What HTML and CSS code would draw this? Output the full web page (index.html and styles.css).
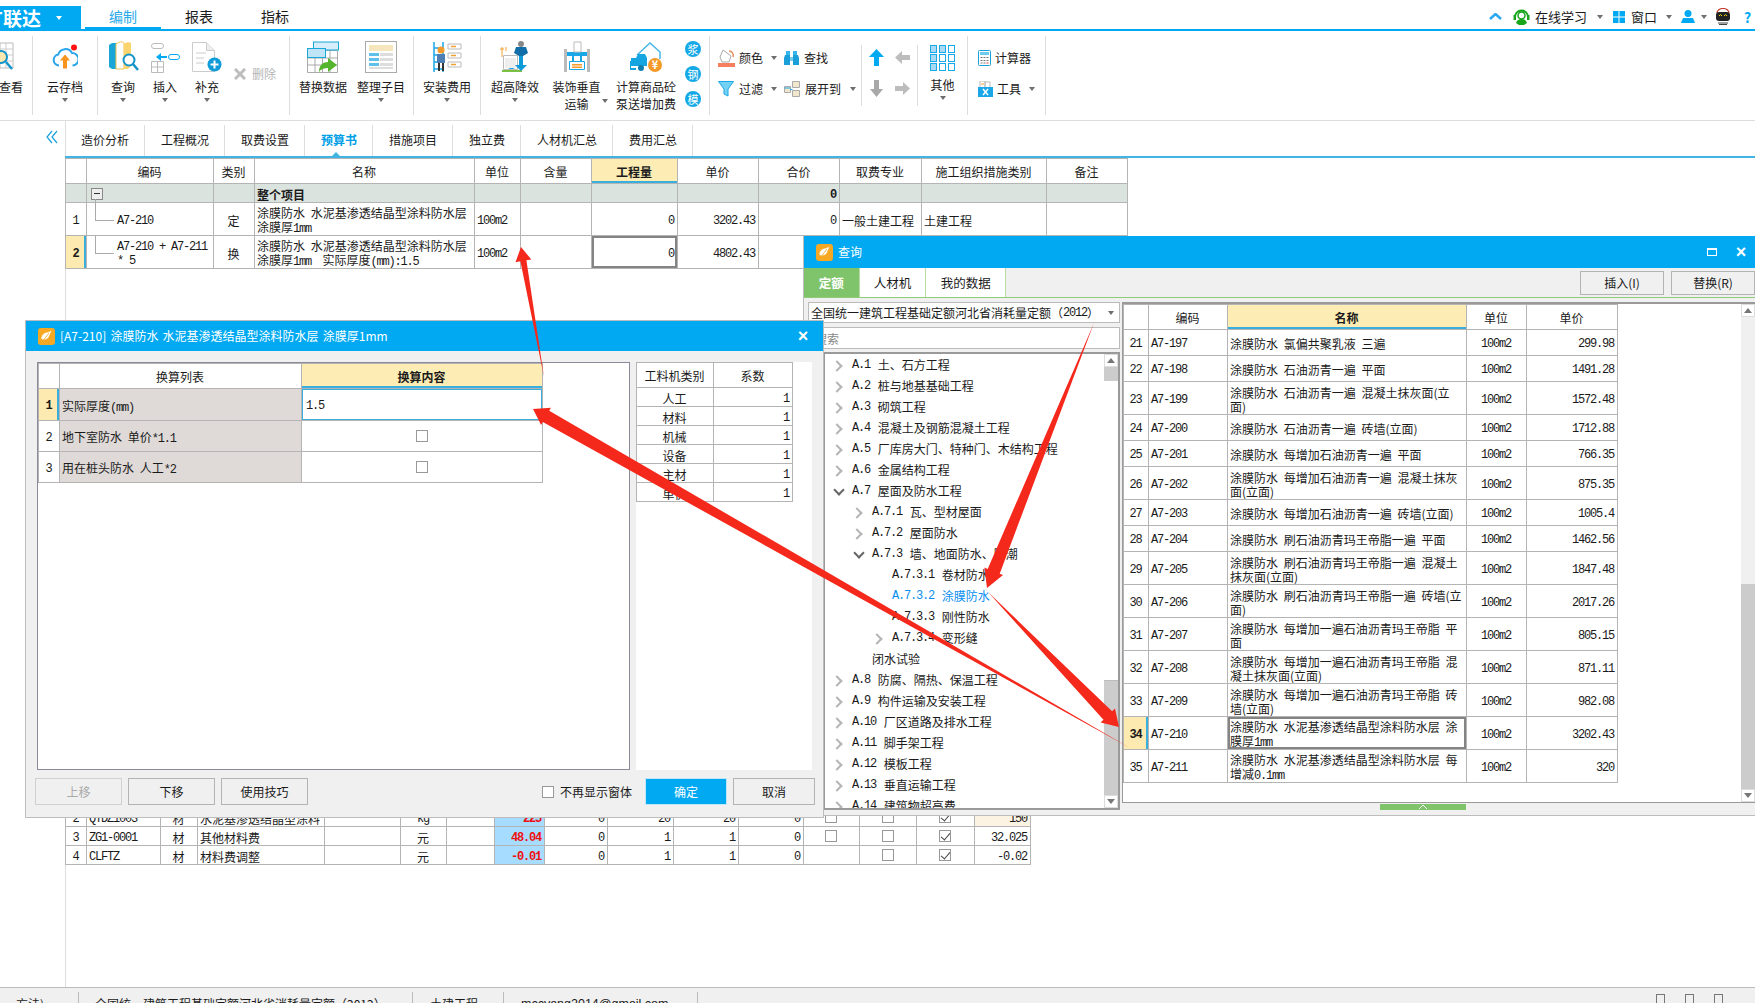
FILE: index.html
```html
<!DOCTYPE html>
<html lang="zh-CN">
<head>
    <meta charset="UTF-8">
    <title>广联达 预算书</title>
    <link rel="stylesheet" href="styles.css">
</head>
<body>
    <!-- top bar -->
    <div class="topbar">
        <div class="logo"><span class="logo-text">广联达</span><i class="caret caret-white"></i></div>
        <div class="menu-tab active">编制</div>
        <div class="menu-tab">报表</div>
        <div class="menu-tab">指标</div>
        <div class="top-right">
            <svg class="tr-up" width="13" height="7" viewBox="0 0 13 7"><path d="M1 6l5.500-5 5.500 5" fill="none" stroke="#2aa9f0" stroke-width="2.500"/></svg>
            <svg class="tr-head" width="17" height="17" viewBox="0 0 17 17"><path d="M2 9a6.500 6.500 0 0 1 13 0" fill="none" stroke="#17a51c" stroke-width="2"/><circle cx="8.500" cy="7.500" r="3.500" fill="none" stroke="#17a51c" stroke-width="1.500"/><rect x="0.500" y="7" width="2.500" height="5" fill="#17a51c"/><rect x="14" y="7" width="2.500" height="5" fill="#17a51c"/><path d="M3 15c1-3 3-4 5.500-4s4.500 1 5.500 4l-3 2H6z" fill="#17a51c"/></svg>
            <span class="tr-learn">在线学习</span>
            <i class="caret tr-c1"></i>
            <svg class="tr-win" width="12" height="12" viewBox="0 0 12 12"><path d="M0 0h5.500v5.500H0zM6.500 0H12v5.500H6.500zM0 6.500h5.500V12H0zM6.500 6.500H12V12H6.500z" fill="#00a9f1"/></svg>
            <span class="tr-wintext">窗口</span>
            <i class="caret tr-c2"></i>
            <svg class="tr-user" width="14" height="13" viewBox="0 0 14 13"><circle cx="7" cy="3.500" r="3.500" fill="#00a9f1"/><path d="M0 13l2-5h10l2 5z" fill="#00a9f1"/></svg>
            <i class="caret tr-c3"></i>
            <svg class="tr-bot" width="16" height="17" viewBox="0 0 16 17"><path d="M2 5a6 4.500 0 0 1 12 0" fill="none" stroke="#c0392b" stroke-width="1.200"/><rect x="1" y="4" width="14" height="9" rx="3" fill="#222"/><path d="M4 8l1.500-1.500L7 8M9 8l1.500-1.500L12 8" fill="none" stroke="#f5d90a"/><path d="M3 15h10M4 16.500h8" stroke="#444"/></svg>
            <span class="tr-help">?</span>
        </div>
    </div>

    <!-- ribbon -->
    <div class="ribbon">
        <div class="rb-group g-view">
            <div class="tool tool-view">
                <svg class="icon" width="14" height="32" viewBox="0 0 14 32"><path d="M0 2h13v25H0z" fill="#fff" stroke="#bbb"/><path d="M0 8h13M0 14h13M0 20h13M6 2v25" stroke="#ccc"/><circle cx="1" cy="16" r="6" fill="#ffe9b0" stroke="#1494c8" stroke-width="2"/><path d="M6 21l6 7" stroke="#1494c8" stroke-width="2.500"/></svg>
                <span class="label">查看</span>
            </div>
        </div>
        <div class="rb-group g-cloud">
            <div class="tool tool-full">
                <svg class="icon" width="26" height="25" viewBox="0 0 26 25"><path d="M7 21a5.500 5.500 0 0 1-.8-10.900A7.500 7.500 0 0 1 20 8.500a6 6 0 0 1 .5 12.500" fill="none" stroke="#2ba6e8" stroke-width="2"/><path d="M13 10l5 6h-3v8h-4v-8H8z" fill="#f7941d"/><circle cx="22" cy="3" r="3" fill="#f11"/></svg>
                <span class="label">云存档</span>
                <i class="caret"></i>
            </div>
        </div>
        <div class="rb-group g-edit">
            <div class="tool tool-42">
                <svg class="icon" width="31" height="32" viewBox="0 0 31 32"><path d="M1 4l3-2h4v26H4l-3-2z" fill="#1aa7d8"/><path d="M8 3c3-2 6-3 8-1v26H8z" fill="#fff" stroke="#f2c14e"/><path d="M16 3c2-2 5-2 7-1v10l-7 8z" fill="#fbd46d"/><path d="M16 28h4l3-3-7-5z" fill="#fbd46d"/><circle cx="21" cy="19" r="5.500" fill="#fff" stroke="#1494c8" stroke-width="2"/><path d="M25 23l5 6" stroke="#1494c8" stroke-width="2.500"/></svg>
                <span class="label">查询</span>
                <i class="caret"></i>
            </div>
            <div class="tool tool-42">
                <svg class="icon" width="29" height="32" viewBox="0 0 29 32"><rect x="0.500" y="2.500" width="12" height="5" rx="2.500" fill="#fff" stroke="#bbb"/><rect x="17.500" y="13.500" width="11" height="5" rx="2.500" fill="#fff" stroke="#00a9f1"/><path d="M5 16l5-4v3h6v2h-6v3z" fill="#00a9f1"/><path d="M0.500 20.500h12v11h-12zM0.500 26h12M6.500 20.500v11" fill="#fff" stroke="#bbb"/></svg>
                <span class="label">插入</span>
                <i class="caret"></i>
            </div>
            <div class="tool tool-42">
                <svg class="icon" width="30" height="32" viewBox="0 0 30 32"><path d="M0.500 1.500h14l8 8v21h-22z" fill="#fff" stroke="#ccc"/><path d="M14.500 1.500v8h8" fill="#eee" stroke="#ccc"/><path d="M4 12h10M4 17h8M4 22h8" stroke="#ccc"/><circle cx="22.500" cy="23.500" r="7" fill="#0f9bd7"/><path d="M22.500 19.500v8M18.500 23.500h8" stroke="#fff" stroke-width="2"/></svg>
                <span class="label">补充</span>
                <i class="caret"></i>
            </div>
            <div class="tool-delete">
                <svg width="12" height="12" viewBox="0 0 12 12"><path d="M1 1l10 10M11 1L1 11" stroke="#bdbdbd" stroke-width="3"/></svg>
                <span class="label-off">删除</span>
            </div>
        </div>
        <div class="rb-group g-data">
            <div class="tool tool-58">
                <svg class="icon" width="32" height="32" viewBox="0 0 32 32"><path d="M0.500 9.500h30v22h-30zM0.500 17h30M0.500 24h30M8 9.500v22M15.500 9.500v22M23 9.500v22" fill="#fff" stroke="#aaa"/><rect x="6.500" y="1" width="25" height="8" fill="#d5eef9" stroke="#1aa7d8"/><rect x="0.500" y="7.500" width="18" height="9" fill="#bfe4f5" stroke="#1aa7d8"/><path d="M12 31c0-7 4-10 9-10v-4l9 7-9 7v-4c-4 0-7 1-9 4z" fill="#55b52f"/></svg>
                <span class="label">替换数据</span>
            </div>
            <div class="tool tool-58">
                <svg class="icon" width="32" height="32" viewBox="0 0 32 32"><rect x="0.500" y="0.500" width="31" height="31" fill="#fff" stroke="#aaa"/><rect x="4" y="4" width="24" height="6" fill="#f5e6bb"/><path d="M4 12h10v3H4zM4 17h10v3H4zM4 22h10v3H4z" fill="#5fc0ea"/><path d="M15 12h13v3H15zM15 17h13v3H15zM15 22h13v3H15zM4 26h24v2H4z" fill="#ddd"/></svg>
                <span class="label">整理子目</span>
                <i class="caret"></i>
            </div>
        </div>
        <div class="rb-group g-install">
            <div class="tool tool-full">
                <svg class="icon" width="29" height="32" viewBox="0 0 29 32"><path d="M1 1v30M10 1v30M1 7h9M1 14h9M1 21h9M1 28h9" stroke="#1aa7e8" stroke-width="1.500"/><path d="M15 3h13v5H15zM15 12h13v5H15zM15 21h13v5H15z" fill="#fff" stroke="#bbb"/><path d="M18 5.500h5M18 14.500h5M18 23.500h5" stroke="#f0a030" stroke-width="1.500"/><circle cx="8" cy="9" r="3.500" fill="#f39a2b"/><path d="M4 13h8v9H4z" fill="#4d7fb5"/><path d="M5 22h2v8H5zM9 22h2v8H9z" fill="#333"/></svg>
                <span class="label">安装费用</span>
                <i class="caret"></i>
            </div>
        </div>
        <div class="rb-group g-calc">
            <div class="tool tool-56">
                <svg class="icon" width="30" height="32" viewBox="0 0 30 32"><path d="M0 8h4M2 6v10M6 6v4" stroke="#f0a030"/><path d="M3.500 14.500h14v14h-14z" fill="#fff" stroke="#bbb"/><path d="M5 17h11v10H5z" fill="#eee"/><path d="M2 30h20" stroke="#7ac143" stroke-width="2"/><path d="M8 28l2-1h3l2 1z" fill="#1aa7e8"/><circle cx="21" cy="3" r="3" fill="#888"/><path d="M14 12l2-6h10l2 6-5 3h-4z" fill="#126ea8"/><path d="M19 15h4v9h4l-6 6-6-6h4z" fill="#0f9bd7"/></svg>
                <span class="label">超高降效</span>
                <i class="caret"></i>
            </div>
            <div class="tool tool-67">
                <svg class="icon" width="26" height="32" viewBox="0 0 26 32"><path d="M0 8h3v23H0zM23 8h3v23h-3z" fill="#bbb"/><path d="M3 11h20v4H3z" fill="#1aa7e8"/><path d="M10 1h7v10h-7z" fill="#fff" stroke="#bbb"/><path d="M8 15h2v5H8zM16 15h2v5h-2z" fill="#1aa7e8"/><path d="M5.500 20.500h15v8h-15z" fill="#fff" stroke="#1aa7e8"/><path d="M8 23h10v1.500H8zM8 25.500h10V27H8z" fill="#f39a2b"/></svg>
                <span class="label">装饰垂直<br>运输</span>
                <i class="caret caret-side"></i>
            </div>
            <div class="tool tool-72">
                <svg class="icon" width="33" height="32" viewBox="0 0 33 32"><path d="M7 14L20 2l10 9v7" fill="none" stroke="#45b6e6" stroke-width="1.500"/><path d="M1 25V17h5l2-4h7l2 4v8z" fill="#15a6e2"/><path d="M0 20v8h6" fill="none" stroke="#15a6e2" stroke-width="2"/><circle cx="11" cy="27" r="3" fill="#0f7fb0"/><circle cx="25" cy="24" r="7" fill="#f39a2b"/><text class="yen" x="25" y="28">¥</text></svg>
                <span class="label">计算商品砼<br>泵送增加费</span>
            </div>
            <div class="badges">
                <span class="badge">浆</span>
                <span class="badge">钢</span>
                <span class="badge">模</span>
            </div>
        </div>
        <div class="g-find">
            <div class="rtool">
                <svg width="17" height="18" viewBox="0 0 17 18"><path d="M5 1l8 6-2 6H4L2 8z" fill="#fff" stroke="#aaa"/><path d="M11 2c3 0 5 3 4 6" fill="none" stroke="#e89060" stroke-width="1.500"/><path d="M0 14h17v4H0z" fill="#f57f5f"/></svg>
                <span class="rlabel">颜色</span><i class="caret"></i>
            </div>
            <div class="rtool">
                <svg width="15" height="16" viewBox="0 0 15 16"><path d="M2 1h4v4H2zM9 1h4v4H9z" fill="#35b5ea"/><path d="M1 5h5v10H0V8zM9 5h5l1 3v7H9z" fill="#1a9fd8"/><path d="M6 7h3v4H6z" fill="#7bcdf0"/></svg>
                <span class="rlabel">查找</span>
            </div>
            <div class="rtool">
                <svg width="16" height="16" viewBox="0 0 16 16"><path d="M0.500 0.500h15L10 8v7l-4-2V8z" fill="#76d2f5" stroke="#1aa7e8"/></svg>
                <span class="rlabel rlabel-wide">过滤</span><i class="caret"></i>
            </div>
            <div class="rtool">
                <svg width="16" height="16" viewBox="0 0 16 16"><path d="M0.500 5.500h6v6h-6zM8.500 0.500h7v6h-7zM8.500 9.500h7v6h-7z" fill="#f2e6cc" stroke="#aaa"/><path d="M6.500 8.500h2M0.500 7h6" stroke="#1aa7e8"/></svg>
                <span class="rlabel">展开到</span><i class="caret"></i>
            </div>
        </div>
        <div class="thin-sep"></div>
        <div class="g-arrows">
            <svg width="15" height="17" viewBox="0 0 15 17"><path d="M7.500 0L15 8h-5v9H5V8H0z" fill="#00a9f1"/></svg>
            <svg width="15" height="13" viewBox="0 0 15 13"><path d="M0 6.500L7 0v4h8v5H7v4z" fill="#bdbdbd"/></svg>
            <svg width="13" height="17" viewBox="0 0 13 17"><path d="M6.500 17L0 9h4V0h5v9h4z" fill="#a8a8a8"/></svg>
            <svg width="15" height="13" viewBox="0 0 15 13"><path d="M15 6.500L8 0v4H0v5h8v4z" fill="#bdbdbd"/></svg>
        </div>
        <div class="thin-sep"></div>
        <div class="rb-group g-other">
            <div class="tool tool-full tool-other">
                <svg class="icon" width="25" height="26" viewBox="0 0 25 26"><g fill="#a9daf3" stroke="#19a8ea"><rect x="0.500" y="0.500" width="6" height="7"/><rect x="9.500" y="0.500" width="6" height="7"/><rect x="18.500" y="0.500" width="6" height="7" fill="#fff"/><rect x="0.500" y="9.500" width="6" height="7"/><rect x="9.500" y="9.500" width="6" height="7" fill="#fff"/><rect x="18.500" y="9.500" width="6" height="7" fill="#fff"/><rect x="0.500" y="18.500" width="6" height="7"/><rect x="9.500" y="18.500" width="6" height="7" fill="#fff"/><rect x="18.500" y="18.500" width="6" height="7" fill="#fff"/></g></svg>
                <span class="label">其他</span>
                <i class="caret"></i>
            </div>
        </div>
        <div class="rb-group g-tools">
            <div class="rtool">
                <svg width="13" height="16" viewBox="0 0 13 16"><rect x="0.500" y="0.500" width="12" height="15" rx="1" fill="#fff" stroke="#1a9fd8"/><path d="M2 2h9v3H2z" fill="#6ecbf0"/><path d="M2.500 7.500h2M5.500 7.500h2M8.500 7.500h2M2.500 10.500h2M5.500 10.500h2M8.500 10.500h2M2.500 13h2M5.500 13h2" stroke="#777"/><path d="M8.500 13h2" stroke="#e33"/></svg>
                <span class="rlabel">计算器</span>
            </div>
            <div class="rtool">
                <svg width="15" height="16" viewBox="0 0 15 16"><path d="M2 0h5v7H2zM7 1h5v6H7z" fill="#fff" stroke="#bbb"/><path d="M3 3h3" stroke="#f0a030"/><path d="M0 6h15v10H0z" fill="#1aa7e8"/><path d="M5 8l5 6M10 8l-5 6" stroke="#fff" stroke-width="1.500"/></svg>
                <span class="rlabel">工具</span><i class="caret"></i>
            </div>
        </div>
    </div>

    <!-- work area -->
    <div class="workspace">
        <div class="side">
            <svg width="12" height="14" viewBox="0 0 12 14"><path d="M6 1L1 7l5 6M11 1L6 7l5 6" fill="none" stroke="#19a0dc" stroke-width="1.200"/></svg>
        </div>
        <div class="sheet">
            <div class="doc-tabs">
                <div class="doc-tab">造价分析</div>
                <div class="doc-tab">工程概况</div>
                <div class="doc-tab">取费设置</div>
                <div class="doc-tab current">预算书</div>
                <div class="doc-tab">措施项目</div>
                <div class="doc-tab">独立费</div>
                <div class="doc-tab">人材机汇总</div>
                <div class="doc-tab">费用汇总</div>
            </div>

            <table class="grid budget">
                <colgroup>
                    <col class="w21"><col class="w127"><col class="w41"><col class="w220"><col class="w46"><col class="w71"><col class="w86"><col class="w81"><col class="w81"><col class="w82"><col class="w125"><col class="w81">
                </colgroup>
                <tr class="h25 head">
                    <th></th><th>编码</th><th>类别</th><th>名称</th><th>单位</th><th>含量</th><th class="sorted">工程量</th><th>单价</th><th>合价</th><th>取费专业</th><th>施工组织措施类别</th><th>备注</th>
                </tr>
                <tr class="h19 group">
                    <td></td><td><span class="fold"></span></td><td></td><td class="bold">整个项目</td><td></td><td></td><td></td><td></td><td class="m r bold">0</td><td></td><td></td><td></td>
                </tr>
                <tr class="h33">
                    <td class="m c">1</td><td class="m treecell first">A7-210</td><td class="c">定</td><td>涂膜防水 水泥基渗透结晶型涂料防水层<br>涂膜厚<span class="n">1mm</span></td><td class="m">100m2</td><td></td><td class="m r">0</td><td class="m r">3202.43</td><td class="m r">0</td><td>一般土建工程</td><td>土建工程</td><td></td>
                </tr>
                <tr class="h33">
                    <td class="m c cur-idx">2</td><td class="m treecell last">A7-210 + A7-211<br>* 5</td><td class="c">换</td><td>涂膜防水 水泥基渗透结晶型涂料防水层<br>涂膜厚<span class="n">1mm</span>&nbsp; 实际厚度<span class="n">(mm):1.5</span></td><td class="m">100m2</td><td></td><td class="m r picked">0</td><td class="m r">4802.43</td><td></td><td></td><td></td><td></td>
                </tr>
            </table>

            <table class="grid materials">
                <colgroup>
                    <col class="w21"><col class="w74"><col class="w37"><col class="w127"><col class="w76"><col class="w46"><col class="w48"><col class="w50"><col class="w63"><col class="w66"><col class="w65"><col class="w65"><col class="w56"><col class="w57"><col class="w58"><col class="w56">
                </colgroup>
                <tr class="h19">
                    <td class="m c">2</td><td class="m">QTDZ1003</td><td class="c">材</td><td>水泥基渗透结晶型涂料</td><td></td><td class="c m">kg</td><td></td><td class="m r price">225</td><td class="m r">0</td><td class="m r">20</td><td class="m r">20</td><td class="m r">0</td><td class="c"><span class="cb"></span></td><td class="c"><span class="cb"></span></td><td class="c"><span class="cb on"></span></td><td class="m r warm">150</td>
                </tr>
                <tr class="h19">
                    <td class="m c">3</td><td class="m">ZG1-0001</td><td class="c">材</td><td>其他材料费</td><td></td><td class="c">元</td><td></td><td class="m r price">48.04</td><td class="m r">0</td><td class="m r">1</td><td class="m r">1</td><td class="m r">0</td><td class="c"><span class="cb"></span></td><td class="c"><span class="cb"></span></td><td class="c"><span class="cb on"></span></td><td class="m r">32.025</td>
                </tr>
                <tr class="h19">
                    <td class="m c">4</td><td class="m">CLFTZ</td><td class="c">材</td><td>材料费调整</td><td></td><td class="c">元</td><td></td><td class="m r price">-0.01</td><td class="m r">0</td><td class="m r">1</td><td class="m r">1</td><td class="m r">0</td><td></td><td class="c"><span class="cb"></span></td><td class="c"><span class="cb on"></span></td><td class="m r">-0.02</td>
                </tr>
            </table>
        </div>
    </div>

    <!-- status bar -->
    <div class="statusbar">
        <div class="st st-a">方法)</div>
        <div class="st st-b">全国统一建筑工程基础定额河北省消耗量定额（2012）</div>
        <div class="st st-c">土建工程</div>
        <div class="st st-d">mccyang2014@gmail.com</div>
        <div class="st-icons"><i></i><i></i><i></i></div>
    </div>

    <!-- query window -->
    <div class="win query">
        <div class="win-title">
            <svg class="app-icon" width="17" height="17" viewBox="0 0 17 17"><rect width="17" height="17" rx="3" fill="#f7a823"/><path d="M3 11c0-4 3-7 7-7l4-2-2 5c-1 3-3 5-7 5zM4 14l7-9" fill="#fff" stroke="#f7a823" stroke-width=".8"/></svg>
            <span>查询</span>
            <span class="win-max"></span>
            <span class="win-x">×</span>
        </div>
        <div class="query-tabs">
            <div class="q-tab on">定额</div>
            <div class="q-tab q-mid">人材机</div>
            <div class="q-tab q-wide">我的数据</div>
            <div class="q-btn q-btn-first">插入(I)</div>
            <div class="q-btn">替换(R)</div>
        </div>
        <div class="query-body">
            <div class="q-left">
                <div class="q-select">全国统一建筑工程基础定额河北省消耗量定额（<span class="n">2012</span>）<i class="caret"></i></div>
                <div class="q-search">搜索</div>
                <div class="q-tree">
                    <div class="tree-list">
                        <div class="node"><i class="chev"></i><span class="n">A.1</span> 土、石方工程</div>
                        <div class="node"><i class="chev"></i><span class="n">A.2</span> 桩与地基基础工程</div>
                        <div class="node"><i class="chev"></i><span class="n">A.3</span> 砌筑工程</div>
                        <div class="node"><i class="chev"></i><span class="n">A.4</span> 混凝土及钢筋混凝土工程</div>
                        <div class="node"><i class="chev"></i><span class="n">A.5</span> 厂库房大门、特种门、木结构工程</div>
                        <div class="node"><i class="chev"></i><span class="n">A.6</span> 金属结构工程</div>
                        <div class="node"><i class="chev open"></i><span class="n">A.7</span> 屋面及防水工程</div>
                        <div class="node lv2"><i class="chev"></i><span class="n">A.7.1</span> 瓦、型材屋面</div>
                        <div class="node lv2"><i class="chev"></i><span class="n">A.7.2</span> 屋面防水</div>
                        <div class="node lv2"><i class="chev open"></i><span class="n">A.7.3</span> 墙、地面防水、防潮</div>
                        <div class="node lv3"><i class="chev none"></i><span class="n">A.7.3.1</span> 卷材防水</div>
                        <div class="node lv3 sel"><i class="chev none"></i><span class="n">A.7.3.2</span> 涂膜防水</div>
                        <div class="node lv3"><i class="chev none"></i><span class="n">A.7.3.3</span> 刚性防水</div>
                        <div class="node lv3"><i class="chev"></i><span class="n">A.7.3.4</span> 变形缝</div>
                        <div class="node lv2"><i class="chev none"></i>闭水试验</div>
                        <div class="node"><i class="chev"></i><span class="n">A.8</span> 防腐、隔热、保温工程</div>
                        <div class="node"><i class="chev"></i><span class="n">A.9</span> 构件运输及安装工程</div>
                        <div class="node"><i class="chev"></i><span class="n">A.10</span> 厂区道路及排水工程</div>
                        <div class="node"><i class="chev"></i><span class="n">A.11</span> 脚手架工程</div>
                        <div class="node"><i class="chev"></i><span class="n">A.12</span> 模板工程</div>
                        <div class="node"><i class="chev"></i><span class="n">A.13</span> 垂直运输工程</div>
                        <div class="node"><i class="chev"></i><span class="n">A.14</span> 建筑物超高费</div>
                    </div>
                    <div class="vbar">
                        <span class="vb-up"></span>
                        <span class="vb-grey vb-grey-s"></span>
                        <span class="vb-track"></span>
                        <span class="vb-grey vb-grey-l"></span>
                        <span class="vb-down"></span>
                    </div>
                </div>
            </div>
            <div class="q-right">
                <div class="q-box">
                    <table class="grid quota">
                        <colgroup><col class="w25"><col class="w79"><col class="w239"><col class="w60"><col class="w91"></colgroup>
                        <tr class="h25"><th></th><th>编码</th><th class="sorted">名称</th><th>单位</th><th>单价</th></tr>
                        <tr class="h26"><td class="m c">21</td><td class="m">A7-197</td><td>涂膜防水 氯偏共聚乳液 三遍</td><td class="m c">100m2</td><td class="m r">299.98</td></tr>
                        <tr class="h26"><td class="m c">22</td><td class="m">A7-198</td><td>涂膜防水 石油沥青一遍 平面</td><td class="m c">100m2</td><td class="m r">1491.28</td></tr>
                        <tr class="h33"><td class="m c">23</td><td class="m">A7-199</td><td>涂膜防水 石油沥青一遍 混凝土抹灰面(立<br>面)</td><td class="m c">100m2</td><td class="m r">1572.48</td></tr>
                        <tr class="h26"><td class="m c">24</td><td class="m">A7-200</td><td>涂膜防水 石油沥青一遍 砖墙(立面)</td><td class="m c">100m2</td><td class="m r">1712.88</td></tr>
                        <tr class="h26"><td class="m c">25</td><td class="m">A7-201</td><td>涂膜防水 每增加石油沥青一遍 平面</td><td class="m c">100m2</td><td class="m r">766.35</td></tr>
                        <tr class="h33"><td class="m c">26</td><td class="m">A7-202</td><td>涂膜防水 每增加石油沥青一遍 混凝土抹灰<br>面(立面)</td><td class="m c">100m2</td><td class="m r">875.35</td></tr>
                        <tr class="h26"><td class="m c">27</td><td class="m">A7-203</td><td>涂膜防水 每增加石油沥青一遍 砖墙(立面)</td><td class="m c">100m2</td><td class="m r">1005.4</td></tr>
                        <tr class="h26"><td class="m c">28</td><td class="m">A7-204</td><td>涂膜防水 刷石油沥青玛王帝脂一遍 平面</td><td class="m c">100m2</td><td class="m r">1462.56</td></tr>
                        <tr class="h33"><td class="m c">29</td><td class="m">A7-205</td><td>涂膜防水 刷石油沥青玛王帝脂一遍 混凝土<br>抹灰面(立面)</td><td class="m c">100m2</td><td class="m r">1847.48</td></tr>
                        <tr class="h33"><td class="m c">30</td><td class="m">A7-206</td><td>涂膜防水 刷石油沥青玛王帝脂一遍 砖墙(立<br>面)</td><td class="m c">100m2</td><td class="m r">2017.26</td></tr>
                        <tr class="h33"><td class="m c">31</td><td class="m">A7-207</td><td>涂膜防水 每增加一遍石油沥青玛王帝脂 平<br>面</td><td class="m c">100m2</td><td class="m r">805.15</td></tr>
                        <tr class="h33"><td class="m c">32</td><td class="m">A7-208</td><td>涂膜防水 每增加一遍石油沥青玛王帝脂 混<br>凝土抹灰面(立面)</td><td class="m c">100m2</td><td class="m r">871.11</td></tr>
                        <tr class="h33"><td class="m c">33</td><td class="m">A7-209</td><td>涂膜防水 每增加一遍石油沥青玛王帝脂 砖<br>墙(立面)</td><td class="m c">100m2</td><td class="m r">982.08</td></tr>
                        <tr class="h33"><td class="m c cur-idx">34</td><td class="m">A7-210</td><td class="picked">涂膜防水 水泥基渗透结晶型涂料防水层 涂<br>膜厚<span class="n">1mm</span></td><td class="m c">100m2</td><td class="m r">3202.43</td></tr>
                        <tr class="h33"><td class="m c">35</td><td class="m">A7-211</td><td>涂膜防水 水泥基渗透结晶型涂料防水层 每<br>增减<span class="n">0.1mm</span></td><td class="m c">100m2</td><td class="m r">320</td></tr>
                    </table>
                    <div class="vbar vbar-q">
                        <span class="vb-up"></span>
                        <span class="vb-light"></span>
                        <span class="vb-grey vb-grey-q"></span>
                        <span class="vb-down"></span>
                    </div>
                </div>
                <div class="q-handle"><svg width="10" height="6" viewBox="0 0 10 6"><path d="M1 5l4-4 4 4" fill="none" stroke="#fff"/></svg></div>
            </div>
        </div>
    </div>

    <!-- conversion window -->
    <div class="win convert">
        <div class="win-title">
            <svg class="app-icon" width="17" height="17" viewBox="0 0 17 17"><rect width="17" height="17" rx="3" fill="#f7a823"/><path d="M3 11c0-4 3-7 7-7l4-2-2 5c-1 3-3 5-7 5zM4 14l7-9" fill="#fff" stroke="#f7a823" stroke-width=".8"/></svg>
            <span>[A7-210] 涂膜防水 水泥基渗透结晶型涂料防水层 涂膜厚1mm</span>
            <span class="win-x">×</span>
        </div>
        <div class="conv-main">
            <div class="conv-box">
                <table class="grid conv-table">
                    <colgroup><col class="w21"><col class="w242"><col class="w241"></colgroup>
                    <tr class="h25"><th></th><th>换算列表</th><th class="sorted">换算内容</th></tr>
                    <tr class="h32"><td class="m c cur-idx">1</td><td class="tinted">实际厚度<span class="n">(mm)</span></td><td class="m editing">1.5</td></tr>
                    <tr class="h31"><td class="m c">2</td><td class="tinted">地下室防水 单价<span class="n">*1.1</span></td><td class="c"><span class="cb"></span></td></tr>
                    <tr class="h31"><td class="m c">3</td><td class="tinted">用在桩头防水 人工<span class="n">*2</span></td><td class="c"><span class="cb"></span></td></tr>
                </table>
            </div>
            <div class="conv-side">
                <table class="grid ratio">
                    <colgroup><col class="w77"><col class="w79"></colgroup>
                    <tr class="h25"><th>工料机类别</th><th>系数</th></tr>
                    <tr class="h19"><td class="c">人工</td><td class="m r">1</td></tr>
                    <tr class="h19"><td class="c">材料</td><td class="m r">1</td></tr>
                    <tr class="h19"><td class="c">机械</td><td class="m r">1</td></tr>
                    <tr class="h19"><td class="c">设备</td><td class="m r">1</td></tr>
                    <tr class="h19"><td class="c">主材</td><td class="m r">1</td></tr>
                    <tr class="h19"><td class="c">单价</td><td class="m r">1</td></tr>
                </table>
            </div>
        </div>
        <div class="conv-foot">
            <div class="btn off">上移</div>
            <div class="btn">下移</div>
            <div class="btn">使用技巧</div>
            <span class="cb foot-cb"></span>
            <span class="foot-label">不再显示窗体</span>
            <div class="btn primary">确定</div>
            <div class="btn">取消</div>
        </div>
    </div>

    <!-- red annotation arrows -->
    <svg class="marks" width="1755" height="1003" viewBox="0 0 1755 1003">
        <polygon points="544,377 526.400,260.300 531.300,259.400 521,247 515.500,262.200 520.400,261.300"/>
        <polygon points="1130,748 549.200,410.800 550.900,407.700 533,409 541.100,425.100 542.800,422"/>
        <polygon points="1094,323 999.700,573.700 1003,575 987,588 984.400,567.600 987.700,568.900"/>
        <polygon points="988,592 1112.100,711.300 1115,708.500 1119,727 1100.600,722.500 1103.500,719.700"/>
    </svg>
</body>
</html>
```

FILE: styles.css
```css
* {
    margin: 0;
    padding: 0;
    box-sizing: border-box;
}

body {
    position: relative;
    display: flex;
    flex-direction: column;
    width: 1755px;
    height: 1003px;
    overflow: hidden;
    background: #fff;
    color: #1a1a1a;
    font-family: "Noto Sans CJK SC", "Liberation Sans", sans-serif;
    font-size: 12px;
    line-height: 14px;
    word-spacing: 3px;
}

i {
    display: block;
}

.n,
.m {
    font-family: "Liberation Mono", "Noto Sans CJK SC", monospace;
    font-size: 12px;
    letter-spacing: -1.2px;
    word-spacing: 0;
}

.n {
    line-height: 1;
}

.caret {
    width: 0;
    height: 0;
    border-left: 3.5px solid transparent;
    border-right: 3.5px solid transparent;
    border-top: 4px solid #6e6e6e;
}

.caret-white {
    border-top-color: #fff;
}

/* top bar */
.topbar {
    display: flex;
    height: 31px;
    border-bottom: 2px solid #00a9f1;
    flex: none;
}

.logo {
    display: flex;
    justify-content: flex-end;
    align-items: center;
    width: 81px;
    height: 23px;
    margin: 6px 4px 0 0;
    padding-right: 19px;
    overflow: hidden;
    background: #00a9f1;
    color: #fff;
}

.logo-text {
    flex: none;
    margin-right: 15px;
    font-size: 19px;
    font-weight: 700;
}

.menu-tab {
    width: 76px;
    height: 31px;
    padding-top: 9px;
    font-size: 14px;
    text-align: center;
}

.menu-tab.active {
    border-bottom: 4px solid #00a9f1;
    color: #2aa9e8;
}

.top-right {
    display: flex;
    align-items: center;
    margin-left: auto;
    height: 29px;
    padding-top: 4px;
    font-size: 13px;
}

.tr-up { margin-right: 11px; }
.tr-head { margin-right: 5px; }
.tr-learn { margin-right: 10px; }
.tr-c1 { margin-right: 10px; }
.tr-win { margin-right: 6px; }
.tr-wintext { margin-right: 9px; }
.tr-c2 { margin-right: 9px; }
.tr-user { margin-right: 6px; }
.tr-c3 { margin-right: 8px; }
.tr-bot { margin-right: 13px; }

.tr-help {
    width: 11px;
    color: #00a9f1;
    font-size: 14px;
    font-weight: 700;
}

/* ribbon */
.ribbon {
    display: flex;
    flex: none;
    height: 90px;
    padding-top: 5px;
    border-bottom: 1px solid #ddd;
}

.rb-group {
    display: flex;
    flex: none;
    height: 79px;
    border-right: 1px solid #ddd;
}

.g-view { width: 33px; }
.g-cloud { width: 65px; }
.g-edit { width: 192px; padding-left: 4px; }
.g-data { width: 124px; padding-left: 4px; }
.g-install { width: 67px; }
.g-calc { width: 229px; padding-left: 6px; }
.g-other { width: 50px; }
.g-tools { display: grid; grid-template-rows: 31px 31px; width: 78px; padding: 6px 0 0 10px; }

.tool {
    position: relative;
    display: flex;
    flex: none;
    flex-direction: column;
    align-items: center;
    padding-top: 5px;
}

.tool .icon {
    flex: none;
    height: 32px;
    margin-bottom: 5px;
}

.tool .caret {
    margin-top: 3px;
}

.tool .caret-side {
    position: absolute;
    top: 60px;
    right: 2px;
}

.tool-view { width: 44px; margin-left: -11px; align-items: center; }
.tool-view .icon { align-self: flex-end; margin-right: 19px; }
.tool-full { width: 100%; }
.tool-42 { width: 42px; }
.tool-58 { width: 58px; }
.tool-56 { width: 56px; }
.tool-67 { width: 67px; }
.tool-72 { width: 72px; }
.tool-other .icon { margin: 4px 0 5px; height: 26px; }

.label {
    height: 33px;
    text-align: center;
    line-height: 17px;
    white-space: nowrap;
}

.tool .label {
    height: auto;
}

.tool-delete {
    display: flex;
    align-items: center;
    gap: 6px;
    height: 14px;
    margin: 31px 0 0 6px;
}

.label-off {
    color: #b5b5b5;
}

.yen {
    fill: #fff;
    font-size: 11px;
    font-weight: 700;
    text-anchor: middle;
}

.badges {
    display: flex;
    flex-direction: column;
    gap: 9px;
    margin: 5px 0 0 3px;
}

.badge {
    width: 16px;
    height: 16px;
    border-radius: 50%;
    background: #14a9e6;
    color: #fff;
    font-size: 11px;
    line-height: 16px;
    text-align: center;
}

.g-find {
    display: grid;
    grid-template-columns: 66px 76px;
    grid-template-rows: 31px 31px;
    flex: none;
    width: 151px;
    height: 79px;
    padding: 6px 0 0 8px;
}

.rtool {
    display: flex;
    align-items: center;
    gap: 4px;
}

.g-find .rtool:nth-child(even) {
    gap: 5px;
}

.rtool .caret {
    margin-left: 4px;
}

.rlabel {
    white-space: nowrap;
}

.rlabel-wide {
    margin-left: 1px;
}

.thin-sep {
    flex: none;
    width: 1px;
    height: 61px;
    margin-top: 9px;
    background: #ddd;
}

.g-arrows {
    display: grid;
    grid-template-columns: 26px 26px;
    grid-template-rows: 31px 31px;
    place-items: center;
    flex: none;
    width: 55px;
    height: 79px;
    padding: 6px 0 0 1px;
}

/* work area */
.workspace {
    display: flex;
    flex: 1;
    min-height: 0;
}

.side {
    flex: none;
    width: 65px;
    padding: 9px 0 0 46px;
}

.sheet {
    flex: 1;
    border-left: 1px solid #ddd;
}

.doc-tabs {
    position: relative;
    display: flex;
    height: 37px;
    margin-left: -1px;
    padding-top: 4px;
    border-bottom: 2px solid #41b4e3;
}

.doc-tab {
    padding: 8px 15px 0 16px;
    border-right: 1px solid #ddd;
    word-spacing: 0;
}

.doc-tab:first-child {
    margin-left: 0;
    border-left: 1px solid #ddd;
    padding-left: 15px;
}

.doc-tab.current {
    position: relative;
    color: #00a0e8;
    font-weight: 700;
}

.doc-tab.current::after {
    content: '';
    position: absolute;
    left: 27px;
    bottom: 0;
    border-left: 4px solid transparent;
    border-right: 4px solid transparent;
    border-bottom: 4px solid #41b4e3;
}

/* tables */
.grid {
    table-layout: fixed;
    border-collapse: collapse;
    background: #fff;
}

.grid th,
.grid td {
    height: inherit;
    padding: 3px 3px 0 2px;
    overflow: hidden;
    border: 1px solid #b4b4b4;
    white-space: nowrap;
    font-weight: 400;
    vertical-align: middle;
}

.grid th {
    padding-top: 2px;
}

.grid td:has(.cb) {
    padding-top: 0;
}

.grid th.sorted {
    background: #fdedb4;
    box-shadow: inset 0 -2px 0 #3aaedc;
    font-weight: 700;
}

.c { text-align: center; }
.r { text-align: right; }
.grid td.bold { font-weight: 700; }

.h19 { height: 19px; }
.h25 { height: 25px; }
.h26 { height: 26px; }
.h31 { height: 31px; }
.h32 { height: 32px; }
.h33 { height: 33px; }

.w21 { width: 21px; }
.w25 { width: 25px; }
.w37 { width: 37px; }
.w41 { width: 41px; }
.w46 { width: 46px; }
.w48 { width: 48px; }
.w50 { width: 50px; }
.w56 { width: 56px; }
.w57 { width: 57px; }
.w58 { width: 58px; }
.w60 { width: 60px; }
.w63 { width: 63px; }
.w65 { width: 65px; }
.w66 { width: 66px; }
.w71 { width: 71px; }
.w74 { width: 74px; }
.w76 { width: 76px; }
.w77 { width: 77px; }
.w79 { width: 79px; }
.w81 { width: 81px; }
.w82 { width: 82px; }
.w86 { width: 86px; }
.w91 { width: 91px; }
.w125 { width: 125px; }
.w127 { width: 127px; }
.w220 { width: 220px; }
.w239 { width: 239px; }
.w241 { width: 241px; }
.w242 { width: 242px; }

.budget { width: 1062px; margin-left: -1px; }
.materials { width: 965px; margin: 538px 0 0 -1px; }
.quota { width: 494px; flex: none; align-self: flex-start; }
.conv-table { width: 504px; }
.ratio { width: 156px; }

.group td {
    background: #dbe3de;
}

.fold {
    display: block;
    position: relative;
    width: 12px;
    height: 12px;
    margin: -1px 0 0 2px;
    border: 1px solid #888;
    background: #eee;
}

.fold::after {
    content: '';
    position: absolute;
    left: 2px;
    top: 4px;
    width: 6px;
    height: 1px;
    background: #333;
}

.grid td.treecell {
    position: relative;
    padding-left: 30px;
    overflow: visible;
}

.treecell::before {
    content: '';
    position: absolute;
    left: 8px;
    width: 18px;
    border-left: 1px solid #aaa;
    border-bottom: 1px solid #aaa;
}

.treecell.first::before {
    top: -4px;
    height: 21px;
}

.treecell.last::before {
    top: 0;
    height: 17px;
}

.grid td.cur-idx {
    background: #fdeab0;
    box-shadow: inset -2px 0 0 #3aaedc;
    font-weight: 700;
}

.grid td.picked {
    box-shadow: inset 0 0 0 2px #848484;
}

.grid td.tinted {
    background: #dfdad8;
}

.grid td.editing {
    box-shadow: inset 0 0 0 1px #3aaedc;
    padding-left: 4px;
}

.grid td.price {
    background: #a6dcff;
    color: #f01010;
    font-weight: 700;
}

.grid td.warm {
    background: #fdf3e3;
}

.cb {
    display: block;
    position: relative;
    width: 12px;
    height: 12px;
    margin: 0 auto;
    border: 1px solid #999;
    background: #fff;
}

.cb.on::after {
    content: '';
    position: absolute;
    left: 3px;
    top: 0;
    width: 4px;
    height: 8px;
    border-right: 1.5px solid #444;
    border-bottom: 1.5px solid #444;
    transform: rotate(40deg);
}

/* status bar */
.statusbar {
    display: flex;
    flex: none;
    height: 16px;
    overflow: hidden;
    border-top: 1px solid #bbb;
    background: #f0f0f0;
}

.st {
    flex: none;
    margin-top: 4px;
    padding-top: 5px;
    height: 30px;
    border-right: 1px solid #bbb;
    white-space: nowrap;
    word-spacing: 0;
}

.st-a { width: 79px; padding-right: 34px; text-align: right; }
.st-b { width: 334px; padding-left: 16px; }
.st-c { width: 91px; padding-left: 17px; }
.st-d { width: 194px; padding-left: 17px; font-family: "Liberation Sans", sans-serif; font-size: 12.5px; }

.st-icons {
    display: flex;
    gap: 20px;
    margin: 6px 32px 0 auto;
}

.st-icons i {
    width: 9px;
    height: 14px;
    border: 1px solid #777;
}

/* windows on the desktop */
.win {
    position: absolute;
    display: flex;
    flex-direction: column;
    overflow: hidden;
    background: #f0f0f0;
    border: 1px solid #bdbdbd;
}

.win-title {
    display: flex;
    flex: none;
    align-items: center;
    gap: 5px;
    background: #00a9f1;
    color: #fff;
    font-size: 12px;
    word-spacing: 1.5px;
}

.app-icon {
    flex: none;
}

.win-x {
    width: 12px;
    margin-left: auto;
    font-family: "Liberation Sans", sans-serif;
    font-size: 18px;
    font-weight: 700;
    text-align: center;
}

.win-max {
    width: 10px;
    height: 8px;
    margin-left: auto;
    border: 1px solid #fff;
    border-top-width: 2px;
}

.query {
    left: 803px;
    top: 236px;
    width: 952px;
    height: 580px;
    border-width: 0 0 1px 1px;
}

.query .win-title {
    height: 32px;
    padding-left: 12px;
}

.query .win-max + .win-x {
    margin-left: 13px;
    margin-right: 8px;
}

.query-tabs {
    display: flex;
    flex: none;
    height: 30px;
    padding-right: 0;
    border-bottom: 1px solid #8fcb78;
}

.q-tab {
    width: 56px;
    padding-top: 8px;
    background: #fff;
    border-right: 1px solid #b5dca6;
    font-size: 12.5px;
    text-align: center;
}

.q-tab.on {
    background: #7fc46b;
    color: #fff;
    font-weight: 700;
}

.q-mid { width: 67px; }
.q-wide { width: 80px; }

.q-btn {
    flex: none;
    width: 84px;
    height: 24px;
    margin: 3px 0 0 7px;
    padding-top: 4px;
    border: 1px solid #b4b4b4;
    text-align: center;
}

.q-btn-first {
    margin-left: 574px;
}

.query-body {
    display: flex;
    flex: 1;
    gap: 2px;
    padding: 4px 0 0 4px;
    min-height: 0;
}

.q-left {
    display: flex;
    flex: none;
    flex-direction: column;
    width: 312px;
}

.q-select {
    display: flex;
    align-items: center;
    flex: none;
    height: 21px;
    padding-left: 2px;
    border: 1px solid #bbb;
    background: #fff;
    white-space: nowrap;
}

.q-select .caret {
    margin-left: auto;
    margin-right: 5px;
}

.q-search {
    flex: none;
    height: 22px;
    margin-top: 4px;
    padding: 4px 0 0 6px;
    border: 1px solid #bbb;
    background: #fff;
    color: #888;
}

.q-tree {
    display: flex;
    flex: none;
    height: 458px;
    margin: 3px 0 0 16px;
    border: 1px solid #9a9a9a;
    border-width: 2px 2px 2px 1px;
    background: #fff;
    overflow: hidden;
}

.tree-list {
    flex: 1;
    padding-top: 0.5px;
    overflow: hidden;
}

.node {
    display: flex;
    align-items: center;
    height: 21px;
    padding-left: 7px;
    white-space: pre-wrap;
}

.node .n {
    margin-right: 2px;
}

.lv2 { padding-left: 27px; }
.lv3 { padding-left: 47px; }
.sel { color: #0a8fef; }

.chev {
    flex: none;
    position: relative;
    width: 12px;
    height: 12px;
    margin-right: 8px;
}

.chev::after {
    content: '';
    position: absolute;
    left: 1px;
    top: 3px;
    width: 6px;
    height: 6px;
    border-top: 2px solid #b5b5b5;
    border-right: 2px solid #b5b5b5;
    transform: rotate(45deg);
}

.chev.open::after {
    left: 3px;
    top: 1px;
    border-color: #666;
    transform: rotate(135deg);
}

.chev.none::after {
    display: none;
}

.vbar {
    display: flex;
    flex: none;
    flex-direction: column;
    width: 14px;
    background: #fff;
}

.vb-up,
.vb-down {
    flex: none;
    position: relative;
    height: 13px;
    background: #fff;
    border: 1px solid #ddd;
}

.vb-up::after,
.vb-down::after {
    content: '';
    position: absolute;
    left: 2px;
    top: 3px;
    border-left: 4px solid transparent;
    border-right: 4px solid transparent;
    border-bottom: 5px solid #777;
}

.vb-down::after {
    border-bottom: 0;
    border-top: 5px solid #777;
}

.vb-grey { flex: none; background: #ccc; }
.vb-grey-s { height: 14px; }
.vb-grey-l { height: 114px; }
.vb-grey-q { height: 205px; }
.vb-track { flex: 1; background: #fff; border-bottom: 1px solid #bbb; }
.vb-light { flex: 1; background: #f0f0f0; }

.q-right {
    display: flex;
    flex: 1;
    flex-direction: column;
    min-width: 0;
}

.q-box {
    position: relative;
    display: flex;
    justify-content: space-between;
    flex: none;
    height: 501px;
    border: 1px solid #9a9a9a;
    border-top-width: 2px;
    border-right: 0;
    background: #fff;
}

.q-handle {
    display: flex;
    justify-content: center;
    width: 86px;
    height: 6px;
    margin: 1px 0 0 258px;
    background: #7fc46b;
}

/* conversion window */
.convert {
    left: 25px;
    top: 320px;
    width: 799px;
    height: 498px;
    border-width: 1px;
}

.convert .win-title {
    height: 30px;
    padding: 0 14px 0 12px;
}

.conv-main {
    display: flex;
    flex: none;
    gap: 6px;
    height: 408px;
    margin: 11px 0 0 11px;
}

.conv-box {
    flex: none;
    width: 593px;
    border: 1px solid #8a8a9a;
    background: #fff;
}

.conv-side {
    flex: none;
    width: 176px;
    background: #fff;
}

.conv-foot {
    display: flex;
    align-items: center;
    gap: 6px;
    height: 27px;
    margin-top: 8px;
    padding: 0 8px 0 9px;
}

.btn {
    flex: none;
    width: 87px;
    height: 27px;
    padding-top: 6px;
    border: 1px solid #b4b4b4;
    text-align: center;
}

.btn.off {
    border-color: #d0d0d0;
    color: #aaa;
}

.btn.primary {
    width: 82px;
    border-color: #bfe7f9;
    background: #00a9f1;
    color: #fff;
}

.foot-cb {
    margin: 0 0 0 auto;
}

.foot-label {
    margin-right: 7px;
}

.btn:last-child {
    width: 82px;
}

/* annotation */
.marks {
    position: absolute;
    left: 0;
    top: 0;
    pointer-events: none;
}

.marks polygon {
    fill: #f5281c;
}
```
